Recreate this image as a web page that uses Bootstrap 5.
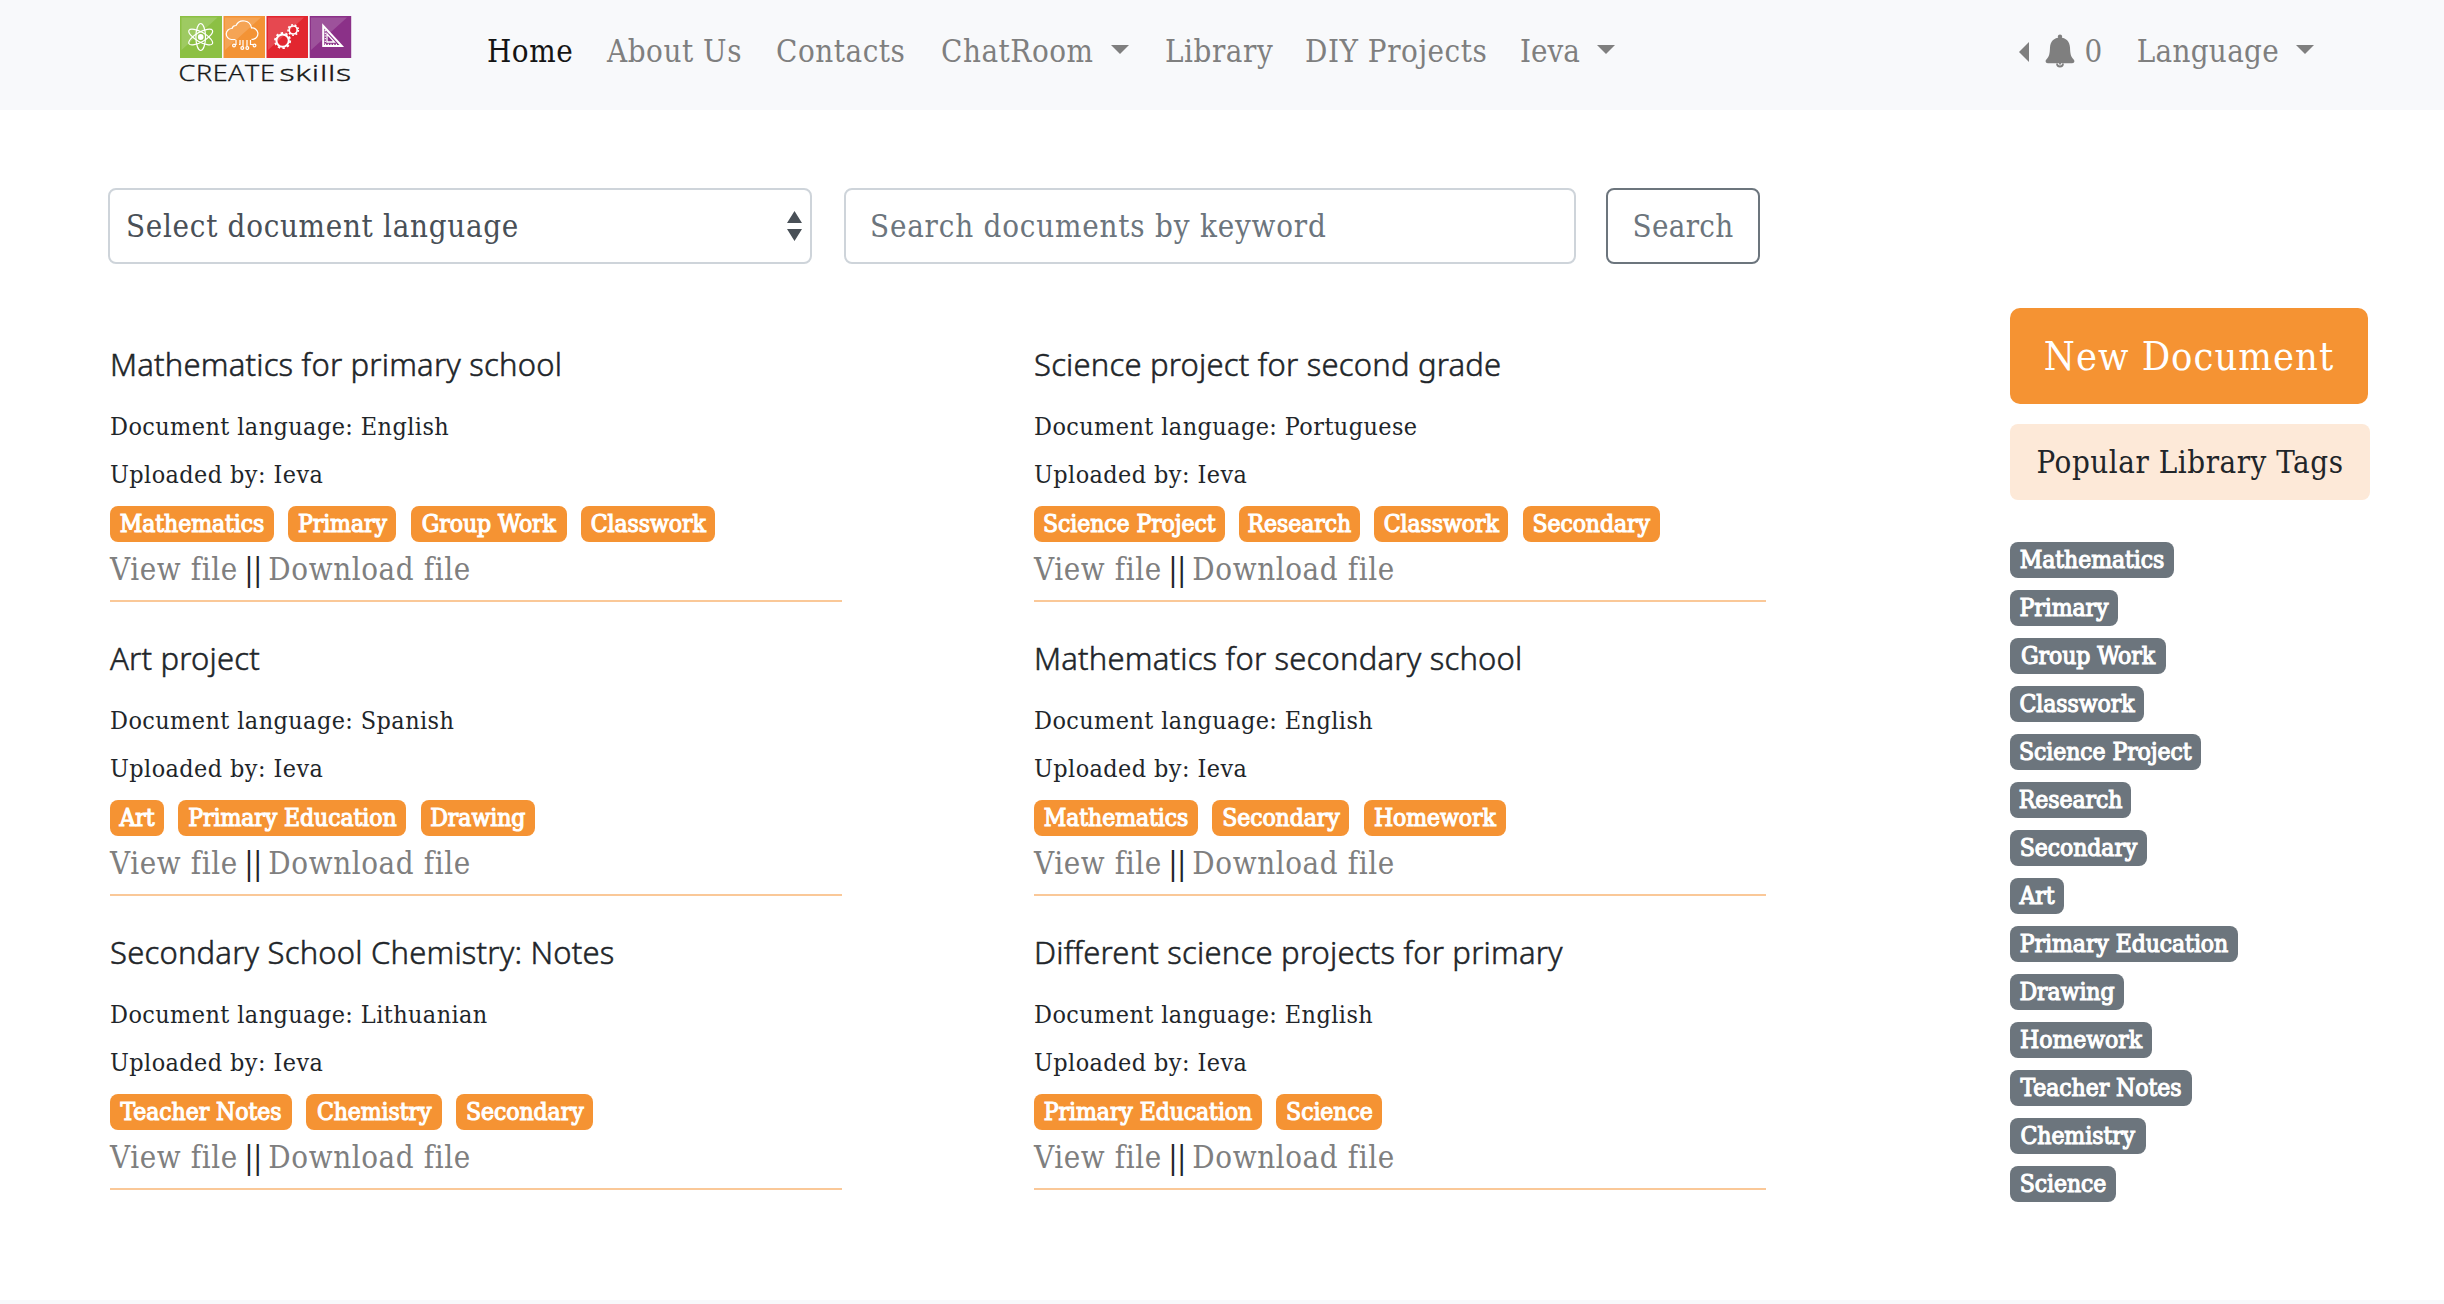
<!DOCTYPE html>
<html lang="en">
<head>
<meta charset="utf-8">
<meta name="viewport" content="width=device-width, initial-scale=1">
<title>CREATEskills - Library</title>
<link href="https://cdn.jsdelivr.net/npm/bootstrap@5.3.0/dist/css/bootstrap.min.css" rel="stylesheet">
<style>
body{font-family:"DejaVu Serif Condensed","DejaVu Serif",serif;font-size:31px;line-height:48px;letter-spacing:.55px;color:#212529;background:#fff;height:1304px;overflow:hidden}
.site-nav{height:110px;background:#f8f9fb;padding:0 122px 0 178px}
.site-nav .nav-link{padding:0;color:#7f7f7f;white-space:nowrap;line-height:48px}
.site-nav .nav-link.active{color:#141414}
.site-nav .navbar-nav{margin-top:-9px}
.main-links{margin-left:125px}
.w-home{width:120px}.w-about{width:169px}.w-contacts{width:165px}.w-chat{width:224px}.w-library{width:140px}.w-diy{width:215px}
.site-nav .tight{letter-spacing:0}
.site-nav .lang{letter-spacing:.3px}
.site-logo{width:176px;height:74px;margin-top:-12px}
.dropdown-toggle::after{margin-left:17px;vertical-align:8px;border-top:9.5px solid;border-right:9.5px solid transparent;border-left:9.5px solid transparent;border-bottom:0}
.bell-item{margin-right:18px}
.bell-link::before{content:"";border:10px solid transparent;border-left:0;border-right-color:#7f7f7f;margin-right:16px;margin-top:3px}
.bell-icon{width:30px;height:34px;margin-right:9px}
.page-body{padding:78px 74px 0 108px}
.search-row{height:76px}
.search-row .form-select,.search-row .form-control,.search-row .btn{height:76px;font-size:inherit;line-height:48px;letter-spacing:.7px;border:2px solid #ced4da;border-radius:8px;font-family:inherit}
.search-row .form-select{width:704px;padding:0 16px;color:#495057;background-image:url("data:image/svg+xml,%3Csvg xmlns='http://www.w3.org/2000/svg' viewBox='0 0 15 30'%3E%3Cpath fill='%23495057' d='M0 12 7.5 0 15 12zM0 18h15L7.500 30z'/%3E%3C/svg%3E");background-size:15px 30px;background-position:right 8px center}
.search-row .form-control{width:732px;padding:0 24px;margin-left:32px;letter-spacing:.8px}
.search-row .form-control::placeholder{color:#6c757d;opacity:1}
.search-row .btn{width:154px;margin-left:30px;padding:0;border-color:#6c757d;color:#6c757d;letter-spacing:.3px}
.doc-grid{display:grid;grid-template-columns:732px 732px;column-gap:192px;margin:76px 0 0 2px}
.doc-item{height:262px;margin-bottom:32px;border-bottom:2px solid #fac898}
.doc-item h5{font:300 31px/48px "Noto Sans",sans-serif;letter-spacing:.2px;margin:0 0 15px;-webkit-text-stroke:.5px #212529}
.doc-item p{font-size:24.9px;line-height:48px;letter-spacing:.43px;margin:0}
.tag-row{gap:14.4px;margin:7px 0 3px}
.tag{height:36px;font-size:24.5px;font-weight:400;line-height:36px;letter-spacing:-.08px;padding:0;border-radius:8px;-webkit-text-stroke:1.1px #fff;background:#f59333}
.side-col .tag{background:#6c757d}
.t-mathematics{width:164px}.t-primary{width:108px}.t-group{width:156px}.t-classwork{width:134px}.t-project{width:190.5px}.t-research{width:121px}.t-secondary{width:137px}.t-art{width:54px}.t-education{width:228px}.t-drawing{width:114px}.t-homework{width:142px}.t-notes{width:182px}.t-chemistry{width:135.5px}.t-science{width:106px}
.doc-links{letter-spacing:-.5px;word-spacing:-2px}
.doc-links a{color:#7f7f7f;text-decoration:none;letter-spacing:.6px;word-spacing:0}
.side-col{width:360px;padding-top:120px}
.new-doc{width:358px;height:96px;font-size:39.5px;letter-spacing:1px;line-height:92px;padding:0;border:0;border-radius:10px;background:#f59333;color:#fff;font-family:inherit}
.popular{height:76px;line-height:77px;border-radius:8px;background:#fde9d8;margin:20px 0 42px}
.side-tags{gap:12px}
.site-foot{height:4px;background:#f8f9fb;margin-top:auto}
</style>
</head>
<body class="d-flex flex-column">
<nav class="site-nav navbar navbar-expand flex-nowrap flex-shrink-0 justify-content-start">
  <a class="navbar-brand p-0 m-0 d-flex" href="#">
    <svg class="site-logo" viewBox="178 12 176 74" fill="none">
      <path fill="#8cc044" d="M180 16h42v42h-42z"/><path fill="#f39335" d="M223.500 16h41.500v42h-41.500z"/><path fill="#e2262f" d="M266.500 16h41.500v42h-41.500z"/><path fill="#8b3188" d="M309.700 16h41.500v42h-41.500z"/>
      <g fill="#fff" fill-opacity=".16"><path d="M181.500 17.500h36L181.500 50z"/><path d="M225 17.500h36L225 50z"/><path d="M268 17.500h36L268 50z"/><path d="M311 17.500h36L311 50z"/></g>
      <g stroke="#fff" stroke-width="1.200"><ellipse cx="200.700" cy="37" rx="4.800" ry="13.500"/><ellipse cx="200.700" cy="37" rx="4.800" ry="13.500" transform="rotate(60 200.700 37)"/><ellipse cx="200.700" cy="37" rx="4.800" ry="13.500" transform="rotate(-60 200.700 37)"/></g>
      <circle cx="200.700" cy="37" r="2.900" fill="#fff"/>
      <g stroke="#fff" stroke-width="1.200"><path d="M235.500 39.500h-4a5.500 5.500 0 0 1 .5-11 4 4 0 0 1 4-3 8.200 8.200 0 0 1 15.500 2.500 5.700 5.700 0 0 1 1.500 11.300h-1.500"/><path d="M236 40v4.500h-2M240 40v4.500h-1M243 40v6.500M247 40v6.500M250.500 40v4.500h3"/><circle cx="234" cy="45.500" r="1.400"/><circle cx="242.300" cy="48" r="1.400"/><circle cx="247.300" cy="48" r="1.400"/><circle cx="254.500" cy="45.500" r="1.400"/></g>
      <g stroke="#fff"><circle cx="282.600" cy="40.600" r="6.200" stroke-width="2"/><circle cx="282.600" cy="40.600" r="7.600" stroke-width="1.800" stroke-dasharray="2.400 2.400"/><circle cx="293.200" cy="30" r="4" stroke-width="1.700"/><circle cx="293.200" cy="30" r="5.200" stroke-width="1.500" stroke-dasharray="1.800 1.830"/></g>
      <g stroke="#fff"><path stroke-width="2" d="M323.200 25.800v20.200h18.600z"/><path stroke-width="1.300" d="M327 34v8h7.500z"/><path stroke-width="1.200" stroke-dasharray="1.200 1.500" d="M325.300 30v14.500M325 44.300h13"/></g>
      <g fill="#151515" font-family="Open Sans" font-weight="300" font-size="22.500" stroke="#151515" stroke-width=".4"><text x="178.500" y="81" textLength="97" lengthAdjust="spacingAndGlyphs">CREATE</text><text x="279.500" y="81" textLength="72.500" lengthAdjust="spacingAndGlyphs">skills</text></g>
    </svg>
  </a>
  <ul class="navbar-nav main-links">
    <li class="nav-item w-home"><a class="nav-link active" href="#">Home</a></li>
    <li class="nav-item w-about"><a class="nav-link" href="#">About Us</a></li>
    <li class="nav-item w-contacts"><a class="nav-link" href="#">Contacts</a></li>
    <li class="nav-item w-chat"><a class="nav-link dropdown-toggle" href="#">ChatRoom</a></li>
    <li class="nav-item w-library"><a class="nav-link" href="#">Library</a></li>
    <li class="nav-item w-diy"><a class="nav-link" href="#">DIY Projects</a></li>
    <li class="nav-item"><a class="nav-link dropdown-toggle tight" href="#">Ieva</a></li>
  </ul>
  <ul class="navbar-nav ms-auto">
    <li class="nav-item bell-item"><a class="nav-link bell-link d-flex align-items-center" href="#">
      <svg class="bell-icon" viewBox="0 0 30 34" fill="#7f7f7f"><circle cx="15" cy="2.800" r="2.200"/><path d="M15 3.500c6 0 9.800 4.200 10 10 .2 6 .8 9 3 11.200 1 1 1.400 1.700 1.400 2.500 0 1.300-1 2-2.300 2H2.900c-1.300 0-2.300-.7-2.300-2 0-.8.400-1.500 1.400-2.500 2.200-2.200 2.800-5.200 3-11.200.2-5.800 4-10 10-10z"/><path fill="none" stroke="#7f7f7f" stroke-width="1.800" d="M12 29.500a3 3 0 0 0 6 0M15 29v1.500"/></svg>0</a></li>
    <li class="nav-item"><a class="nav-link dropdown-toggle lang" href="#">Language</a></li>
  </ul>
</nav>

<main class="page-body d-flex justify-content-between">
  <div>
    <form class="search-row d-flex">
      <select class="form-select" aria-label="Document language"><option>Select document language</option></select>
      <input class="form-control" type="search" placeholder="Search documents by keyword">
      <button class="btn btn-outline-secondary" type="button">Search</button>
    </form>
    <div class="doc-grid">
      <article class="doc-item"><h5>Mathematics for primary school</h5><p>Document language: English</p><p>Uploaded by: Ieva</p>
        <div class="tag-row d-flex"><span class="badge tag t-mathematics">Mathematics</span><span class="badge tag t-primary">Primary</span><span class="badge tag t-group">Group Work</span><span class="badge tag t-classwork">Classwork</span></div>
        <div class="doc-links"><a href="#">View file</a> || <a href="#">Download file</a></div></article>
      <article class="doc-item"><h5>Science project for second grade</h5><p>Document language: Portuguese</p><p>Uploaded by: Ieva</p>
        <div class="tag-row d-flex"><span class="badge tag t-project">Science Project</span><span class="badge tag t-research">Research</span><span class="badge tag t-classwork">Classwork</span><span class="badge tag t-secondary">Secondary</span></div>
        <div class="doc-links"><a href="#">View file</a> || <a href="#">Download file</a></div></article>
      <article class="doc-item"><h5>Art project</h5><p>Document language: Spanish</p><p>Uploaded by: Ieva</p>
        <div class="tag-row d-flex"><span class="badge tag t-art">Art</span><span class="badge tag t-education">Primary Education</span><span class="badge tag t-drawing">Drawing</span></div>
        <div class="doc-links"><a href="#">View file</a> || <a href="#">Download file</a></div></article>
      <article class="doc-item"><h5>Mathematics for secondary school</h5><p>Document language: English</p><p>Uploaded by: Ieva</p>
        <div class="tag-row d-flex"><span class="badge tag t-mathematics">Mathematics</span><span class="badge tag t-secondary">Secondary</span><span class="badge tag t-homework">Homework</span></div>
        <div class="doc-links"><a href="#">View file</a> || <a href="#">Download file</a></div></article>
      <article class="doc-item"><h5>Secondary School Chemistry: Notes</h5><p>Document language: Lithuanian</p><p>Uploaded by: Ieva</p>
        <div class="tag-row d-flex"><span class="badge tag t-notes">Teacher Notes</span><span class="badge tag t-chemistry">Chemistry</span><span class="badge tag t-secondary">Secondary</span></div>
        <div class="doc-links"><a href="#">View file</a> || <a href="#">Download file</a></div></article>
      <article class="doc-item"><h5>Different science projects for primary</h5><p>Document language: English</p><p>Uploaded by: Ieva</p>
        <div class="tag-row d-flex"><span class="badge tag t-education">Primary Education</span><span class="badge tag t-science">Science</span></div>
        <div class="doc-links"><a href="#">View file</a> || <a href="#">Download file</a></div></article>
    </div>
  </div>
  <aside class="side-col d-flex flex-column">
    <button class="btn new-doc" type="button">New Document</button>
    <div class="popular text-center">Popular Library Tags</div>
    <div class="side-tags d-flex flex-column align-items-start">
      <span class="badge tag t-mathematics">Mathematics</span><span class="badge tag t-primary">Primary</span><span class="badge tag t-group">Group Work</span><span class="badge tag t-classwork">Classwork</span><span class="badge tag t-project">Science Project</span><span class="badge tag t-research">Research</span><span class="badge tag t-secondary">Secondary</span><span class="badge tag t-art">Art</span><span class="badge tag t-education">Primary Education</span><span class="badge tag t-drawing">Drawing</span><span class="badge tag t-homework">Homework</span><span class="badge tag t-notes">Teacher Notes</span><span class="badge tag t-chemistry">Chemistry</span><span class="badge tag t-science">Science</span>
    </div>
  </aside>
</main>
<footer class="site-foot flex-shrink-0"></footer>
<script src="https://cdn.jsdelivr.net/npm/bootstrap@5.3.0/dist/js/bootstrap.bundle.min.js"></script>
</body>
</html>
